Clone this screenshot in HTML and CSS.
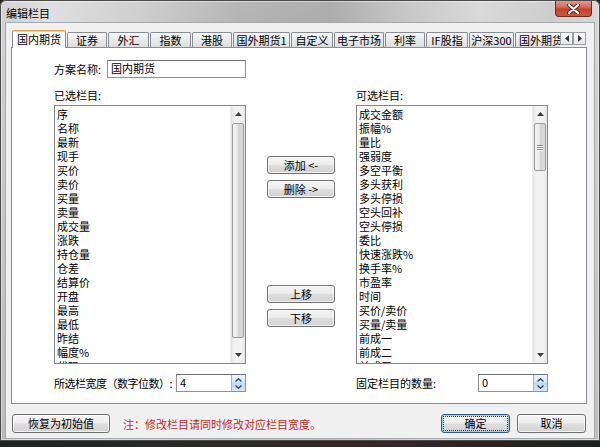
FILE: index.html
```html
<!DOCTYPE html>
<html lang="zh-CN">
<head>
<meta charset="utf-8">
<title>编辑栏目</title>
<link rel="stylesheet" href="styles.css">
</head>
<body>
<div class="window">
  <div class="titlebar">
    <div class="title">编辑栏目</div>
    <div class="close">
      <svg width="13" height="10" viewBox="0 0 13 10"><path d="M2 1 L11 9 M11 1 L2 9" stroke="#5a1e18" stroke-width="4" stroke-linecap="round"/><path d="M2 1 L11 9 M11 1 L2 9" stroke="#fff" stroke-width="2.2" stroke-linecap="round"/></svg>
    </div>
  </div>
  <div class="client">
    <div class="tabstrip">
      <div class="tabs">
        <div class="tab sel w54">国内期货</div>
        <div class="tab w40">证券</div>
        <div class="tab w41">外汇</div>
        <div class="tab w41">指数</div>
        <div class="tab w40">港股</div>
        <div class="tab w57">国外期货1</div>
        <div class="tab w42">自定义</div>
        <div class="tab w50">电子市场</div>
        <div class="tab w40">利率</div>
        <div class="tab w42">IF股指</div>
        <div class="tab w45">沪深300</div>
        <div class="tab w50 clip">国外期货</div>
      </div>
      <div class="tab-arrows">
        <div class="tarrow"><svg width="4" height="7" viewBox="0 0 4 7"><path d="M4 0 L0 3.5 L4 7 Z" fill="#333"/></svg></div>
        <div class="tarrow"><svg width="4" height="7" viewBox="0 0 4 7"><path d="M0 0 L4 3.5 L0 7 Z" fill="#333"/></svg></div>
      </div>
    </div>
    <div class="panel">
      <div class="form-row">
        <span class="form-label">方案名称:</span>
        <div class="textbox">国内期货</div>
      </div>
      <div class="lists">
        <div class="col-label">已选栏目:</div>
        <div></div>
        <div class="col-label">可选栏目:</div>

        <div class="listbox">
          <div class="items">
            <div>序</div><div>名称</div><div>最新</div><div>现手</div><div>买价</div><div>卖价</div><div>买量</div><div>卖量</div><div>成交量</div><div>涨跌</div><div>持仓量</div><div>仓差</div><div>结算价</div><div>开盘</div><div>最高</div><div>最低</div><div>昨结</div><div>幅度%</div><div>代码</div>
          </div>
          <div class="scroll">
            <div class="sb-btn"><svg width="7" height="4" viewBox="0 0 7 4"><path d="M0 4 L3.5 0 L7 4 Z" fill="#3c3c3c"/></svg></div>
            <div class="thumb thumb-long"></div>
            <div class="sb-btn sb-down"><svg width="7" height="4" viewBox="0 0 7 4"><path d="M0 0 L3.5 4 L7 0 Z" fill="#3c3c3c"/></svg></div>
          </div>
        </div>

        <div class="mid">
          <div class="btn">添加 &lt;-</div>
          <div class="btn">删除 -&gt;</div>
          <div class="btn move-up">上移</div>
          <div class="btn">下移</div>
        </div>

        <div class="listbox">
          <div class="items">
            <div>成交金额</div><div>振幅%</div><div>量比</div><div>强弱度</div><div>多空平衡</div><div>多头获利</div><div>多头停损</div><div>空头回补</div><div>空头停损</div><div>委比</div><div>快速涨跌%</div><div>换手率%</div><div>市盈率</div><div>时间</div><div>买价/卖价</div><div>买量/卖量</div><div>前成一</div><div>前成二</div><div>前成三</div>
          </div>
          <div class="scroll">
            <div class="sb-btn"><svg width="7" height="4" viewBox="0 0 7 4"><path d="M0 4 L3.5 0 L7 4 Z" fill="#3c3c3c"/></svg></div>
            <div class="thumb thumb-short"><div class="grip"></div><div class="grip"></div><div class="grip"></div></div>
            <div class="sb-btn sb-down"><svg width="7" height="4" viewBox="0 0 7 4"><path d="M0 0 L3.5 4 L7 0 Z" fill="#3c3c3c"/></svg></div>
          </div>
        </div>

        <div class="spin-row">
          <span class="spin-label tight">所选栏宽度（数字位数）:</span>
          <div class="spin">
            <div class="spin-val">4</div>
            <div class="spin-btns">
              <svg width="7" height="4" viewBox="0 0 7 4"><path d="M0.5 3.5 L3.5 0.8 L6.5 3.5" fill="none" stroke="#25447a" stroke-width="1.3"/></svg>
              <svg width="7" height="4" viewBox="0 0 7 4"><path d="M0.5 0.5 L3.5 3.2 L6.5 0.5" fill="none" stroke="#25447a" stroke-width="1.3"/></svg>
            </div>
          </div>
        </div>
        <div></div>
        <div class="spin-row">
          <span class="spin-label">固定栏目的数量:</span>
          <div class="spin">
            <div class="spin-val">0</div>
            <div class="spin-btns">
              <svg width="7" height="4" viewBox="0 0 7 4"><path d="M0.5 3.5 L3.5 0.8 L6.5 3.5" fill="none" stroke="#25447a" stroke-width="1.3"/></svg>
              <svg width="7" height="4" viewBox="0 0 7 4"><path d="M0.5 0.5 L3.5 3.2 L6.5 0.5" fill="none" stroke="#25447a" stroke-width="1.3"/></svg>
            </div>
          </div>
        </div>
      </div>
    </div>
    <div class="bottom-row">
      <div class="btn btn-reset">恢复为初始值</div>
      <div class="note">注：修改栏目请同时修改对应栏目宽度。</div>
      <div class="btn btn-ok"><span class="focus">确定</span></div>
      <div class="btn btn-cancel">取消</div>
    </div>
  </div>
</div>
</body>
</html>
```

FILE: styles.css
```css
* { box-sizing: border-box; }
html, body { margin: 0; padding: 0; }
body {
  width: 600px;
  height: 447px;
  overflow: hidden;
  background: linear-gradient(90deg, #1f2420, #2b2a22 40%, #3a2424 60%, #1d2221);
  font-family: "Noto Sans CJK SC", "Noto Sans", sans-serif;
  font-size: 11px;
  color: #000;
}
.window {
  height: 441px;
  display: flex;
  flex-direction: column;
  padding-bottom: 3px;
  border-radius: 6px 6px 0 0;
  background:
    linear-gradient(180deg, rgba(255,255,255,0.18), rgba(255,255,255,0) 30%, rgba(0,0,0,0.08)),
    linear-gradient(90deg, #c9c9c9 0%, #d9d9d9 8%, #c8c8c8 22%, #a7a7a7 40%, #9d9d9d 55%, #bdbdbd 68%, #d2d2d2 80%, #c4c4c4 92%, #d0d0d0 100%);
  box-shadow: inset 0 0 0 1px #4a4a4a, inset 0 0 0 2px rgba(255,255,255,0.45);
}
.titlebar {
  height: 23px;
  display: flex;
  align-items: flex-start;
  padding-left: 6px;
  flex: none;
}
.title {
  padding-top: 6px;
  line-height: 14px;
  font-size: 11px;
}
.close {
  margin-left: auto;
  margin-right: 8px;
  margin-top: 1px;
  width: 37px;
  height: 16px;
  border: 1px solid #6b2a22;
  border-top: none;
  border-radius: 0 0 4px 4px;
  background: linear-gradient(180deg, #e19a8c 0%, #d36b57 40%, #c2432c 55%, #c95a3c 100%);
  display: flex;
  align-items: center;
  justify-content: center;
}
.client {
  margin: 0 6px;
  flex: 1;
  background: #f0f0f0;
  display: flex;
  flex-direction: column;
  box-shadow: 0 0 0 1px #a4a9ae;
}
.tabstrip {
  height: 25px;
  display: flex;
  align-items: flex-end;
  padding-left: 6px;
  position: relative;
  z-index: 2;
  flex: none;
}
.tabs {
  width: 548px;
  height: 25px;
  display: flex;
  align-items: flex-end;
  gap: 1px;
  overflow: hidden;
}
.tab {
  flex: none;
  height: 15px;
  margin-bottom: 1px;
  border: 1px solid #898c95;
  border-bottom: none;
  border-radius: 2px 2px 0 0;
  background: linear-gradient(180deg, #f7f7f7, #e9e9e9 50%, #dedede);
  text-align: center;
  line-height: 14px;
  white-space: nowrap;
  overflow: hidden;
}
.tab.sel {
  height: 18px;
  margin-bottom: 0;
  background: #fff;
  border-top: 1px solid #e0a040;
  box-shadow: inset 0 1px 0 #f6cf86;
  line-height: 16px;
}
.tab.clip { text-align: left; padding-left: 3px; }
.w40 { width: 40px; }
.w41 { width: 41px; }
.w42 { width: 42px; }
.w45 { width: 45px; }
.w50 { width: 50px; }
.w54 { width: 54px; }
.w57 { width: 57px; }
.tab-arrows {
  display: flex;
  margin-bottom: 3px;
  margin-left: 0;
}
.tarrow {
  width: 13px;
  height: 13px;
  border: 1px solid #999ca3;
  background: linear-gradient(180deg, #fbfbfb, #e6e6e6);
  display: flex;
  align-items: center;
  justify-content: center;
}
.panel {
  margin: -1px 7px 0 5px;
  height: 357px;
  background: #fff;
  border: 1px solid #898c95;
  padding: 12px 0 0 42px;
}
.form-row {
  display: flex;
  align-items: center;
  height: 18px;
}
.form-label { width: 53px; }
.textbox {
  width: 139px;
  height: 18px;
  border: 1px solid #8f9296;
  border-top-color: #6e7177;
  padding-left: 3px;
  line-height: 15px;
}
.lists {
  display: grid;
  grid-template-columns: 192px 110px 192px;
  grid-template-rows: auto 259px auto;
  margin-top: 10px;
}
.col-label {
  line-height: 14px;
  margin-bottom: 3px;
}
.listbox {
  border: 1px solid #828790;
  display: flex;
  background: #fff;
  height: 259px;
}
.items {
  flex: 1;
  overflow: hidden;
  padding: 1px 0 0 2px;
  line-height: 14px;
  white-space: nowrap;
}
.scroll {
  width: 15px;
  flex: none;
  display: flex;
  flex-direction: column;
  background: linear-gradient(90deg, #e4e4e4, #f2f2f2 25%, #f2f2f2 75%, #e4e4e4);
  border-left: 1px solid #ececec;
}
.sb-btn {
  height: 16px;
  flex: none;
  display: flex;
  align-items: center;
  justify-content: center;
}
.sb-down { margin-top: auto; }
.thumb {
  margin: 1px 1px 0 1px;
  border: 1px solid #9b9b9b;
  border-radius: 2px;
  background: linear-gradient(90deg, #f6f6f6, #e6e6e6 45%, #d4d4d4 55%, #dcdcdc);
  display: flex;
  flex-direction: column;
  align-items: center;
  justify-content: center;
  gap: 1px;
}
.thumb-long { height: 215px; }
.thumb-short { height: 48px; }
.grip {
  width: 6px;
  height: 1px;
  background: #8a8a8a;
  box-shadow: 0 1px 0 #fff;
}
.mid {
  display: flex;
  flex-direction: column;
  align-items: center;
  padding-top: 51px;
  gap: 6px;
}
.btn {
  width: 68px;
  height: 18px;
  border: 1px solid #707070;
  border-radius: 3px;
  background: linear-gradient(180deg, #f6f6f6 0%, #ececec 48%, #dedede 52%, #d2d2d2 100%);
  box-shadow: inset 0 0 0 1px rgba(255,255,255,0.7);
  text-align: center;
  line-height: 16px;
  white-space: nowrap;
}
.move-up { margin-top: 81px; }
.spin-row {
  display: flex;
  align-items: center;
  justify-content: space-between;
  margin-top: 10px;
  height: 18px;
}
.spin-label {
  white-space: nowrap;
  line-height: 14px;
}
.spin-label.tight { letter-spacing: -0.5px; }
.spin {
  flex: none;
  width: 70px;
  height: 18px;
  display: flex;
  border: 1px solid #8f9296;
  border-top-color: #6e7177;
  background: #fff;
}
.spin-val {
  flex: 1;
  padding-left: 3px;
  line-height: 15px;
}
.spin-btns {
  width: 14px;
  display: flex;
  flex-direction: column;
  align-items: center;
  justify-content: space-around;
  background: linear-gradient(180deg, #eef5fc, #d3e3f5 50%, #c2d7ef 52%, #d8e6f6);
  border-left: 1px solid #9fb4cf;
  padding: 1px 0;
}
.bottom-row {
  display: flex;
  align-items: center;
  margin-top: 10px;
  padding: 0 8px 0 6px;
  height: 19px;
}
.bottom-row .btn { height: 19px; line-height: 17px; }
.btn-reset { width: 98px; }
.note {
  margin-left: 13px;
  color: #c62828;
  white-space: nowrap;
}
.btn-ok {
  margin-left: auto;
  width: 69px;
  border-color: #2f5d87;
  box-shadow: inset 0 0 0 1px #9fd0ef;
  padding: 2px;
}
.btn-ok .focus {
  display: block;
  height: 13px;
  line-height: 12px;
  outline: 1px dotted #333;
}
.btn-cancel {
  margin-left: 7px;
  width: 69px;
}
```
